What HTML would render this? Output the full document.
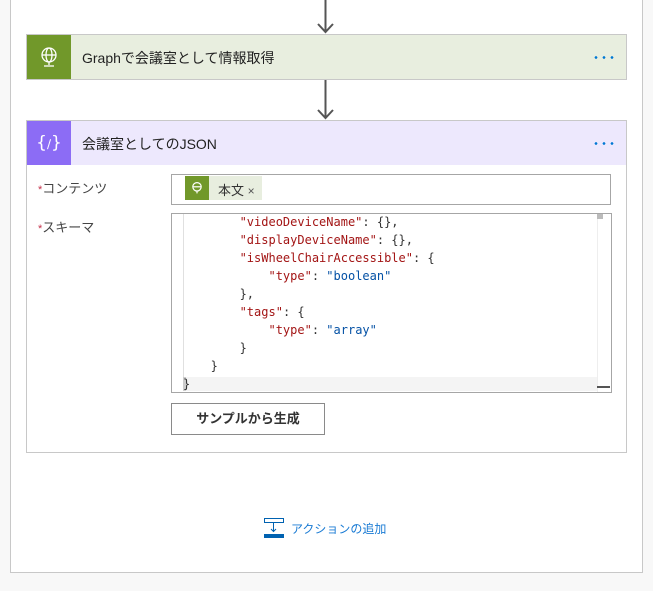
<!DOCTYPE html>
<html><head><meta charset="utf-8"><style>
*{margin:0;padding:0;box-sizing:border-box}
body{width:653px;height:591px;background:#f8f8f8;font-family:"Liberation Sans","Noto Sans CJK JP",sans-serif;position:relative;overflow:hidden}
.panel{position:absolute;left:10px;top:-1px;width:633px;height:574px;background:#fff;border:1px solid #c8c8c8}
.abs{position:absolute}
.card{position:absolute;left:26px;width:601px;border:1px solid #c8c8c8}
.hdr{height:44px;position:relative}
.ico{position:absolute;left:0;top:0;width:44px;height:44px;display:flex;align-items:center;justify-content:center}
.title{position:absolute;left:55px;top:13px;font-size:14px;color:#222}
.dots{position:absolute;right:12px;top:21px;width:22px;height:3px;background:radial-gradient(circle,#0078d4 1.2px,transparent 1.5px) 0 0/8px 3px repeat-x}
.code{font-family:"DejaVu Sans Mono","Liberation Mono",monospace;font-size:12px;line-height:18px;white-space:pre;color:#333}
.k{color:#a31515}.s{color:#0451a5}
</style></head><body>
<div class="panel"></div>
<svg class="abs" style="left:317px;top:0" width="17" height="34"><line x1="8.5" y1="0" x2="8.5" y2="31" stroke="#555" stroke-width="2"/><polyline points="1,24 8.5,32 16,24" fill="none" stroke="#555" stroke-width="2"/></svg>
<div class="card" style="top:34px;height:46px;background:#e8eedf">
 <div class="hdr"><div class="ico" style="background:#71982a">
  <svg width="20" height="22" viewBox="0 0 20 22" fill="none" stroke="#fff" stroke-width="1.3"><circle cx="10" cy="9" r="7"/><ellipse cx="10" cy="9" rx="3" ry="7"/><line x1="3" y1="9" x2="17" y2="9"/><line x1="10" y1="16" x2="10" y2="19"/><line x1="5" y1="20" x2="15" y2="20"/></svg></div>
 <div class="title">Graphで会議室として情報取得</div><div class="dots"></div></div>
</div>
<svg class="abs" style="left:317px;top:80px" width="17" height="40"><line x1="8.5" y1="0" x2="8.5" y2="37" stroke="#555" stroke-width="2"/><polyline points="1,30 8.5,38 16,30" fill="none" stroke="#555" stroke-width="2"/></svg>
<div class="card" style="top:120px;height:333px;background:#fff">
 <div class="hdr" style="background:#ede8fd"><div class="ico" style="background:#8c6cf5">
  <span style="color:#fff;font-size:17px;font-family:'DejaVu Sans',sans-serif">{<span style="font-size:12px">∕</span>}</span></div>
 <div class="title">会議室としてのJSON</div><div class="dots"></div></div>
</div>
<div class="abs" style="left:38px;top:178px;font-size:13px;color:#444"><span style="color:#c4314b;font-size:11px">*</span>コンテンツ</div>
<div class="abs" style="left:38px;top:217px;font-size:13px;color:#444"><span style="color:#c4314b;font-size:11px">*</span>スキーマ</div>
<div class="abs" style="left:171px;top:174px;width:440px;height:31px;border:1px solid #a6a6a6"></div>
<div class="abs" style="left:185px;top:176px;width:77px;height:24px;background:#e8eedf"></div>
<div class="abs" style="left:185px;top:176px;width:24px;height:24px;background:#71982a;display:flex;align-items:center;justify-content:center">
 <svg width="12" height="14" viewBox="0 0 20 22" fill="none" stroke="#fff" stroke-width="2"><circle cx="10" cy="9" r="7"/><line x1="3" y1="9" x2="17" y2="9"/><line x1="10" y1="16" x2="10" y2="20"/></svg></div>
<div class="abs" style="left:218px;top:180px;font-size:13px;color:#333">本文 <span style="font-size:12px;color:#555">×</span></div>
<div class="abs" style="left:171px;top:213px;width:441px;height:180px;border:1px solid #a6a6a6;background:#fff;overflow:hidden">
 <div class="abs" style="left:11px;top:0;width:1px;height:163px;background:#e0e0e0"></div>
 <div class="abs" style="left:11px;top:163px;width:414px;height:14px;background:#f4f4f4"></div>
 <div class="abs" style="left:11px;top:163px;width:3px;height:14px;background:#ccc"></div>
 <div class="abs" style="left:425px;top:0;width:1px;height:178px;background:#eee"></div>
 <div class="abs" style="left:425px;top:0;width:6px;height:5px;background:#bbb"></div>
 <div class="abs" style="left:425px;top:172px;width:13px;height:2px;background:#555"></div>
 <div class="code abs" style="left:17px;top:-1px">       <span class="k">"videoDeviceName"</span>: {},
       <span class="k">"displayDeviceName"</span>: {},
       <span class="k">"isWheelChairAccessible"</span>: {
           <span class="k">"type"</span>: <span class="s">"boolean"</span>
       },
       <span class="k">"tags"</span>: {
           <span class="k">"type"</span>: <span class="s">"array"</span>
       }
   }
</div>
 <div class="code abs" style="left:11px;top:161px">}</div>
</div>
<div class="abs" style="left:171px;top:403px;width:154px;height:32px;border:1px solid #8a8a8a;font-size:13px;font-weight:bold;color:#333;text-align:center;line-height:30px">サンプルから生成</div>
<svg class="abs" style="left:264px;top:518px" width="21" height="20"><rect x="0.5" y="0.5" width="19" height="4" fill="none" stroke="#0062b1"/><line x1="9.5" y1="5" x2="9.5" y2="13" stroke="#0062b1"/><polyline points="7,11 9.5,13.5 12,11" fill="none" stroke="#0062b1"/><rect x="0" y="16" width="20" height="4" fill="#0062b1"/></svg>
<div class="abs" style="left:291px;top:520px;font-size:12px;color:#1a7bd4">アクションの追加</div>
</body></html>
